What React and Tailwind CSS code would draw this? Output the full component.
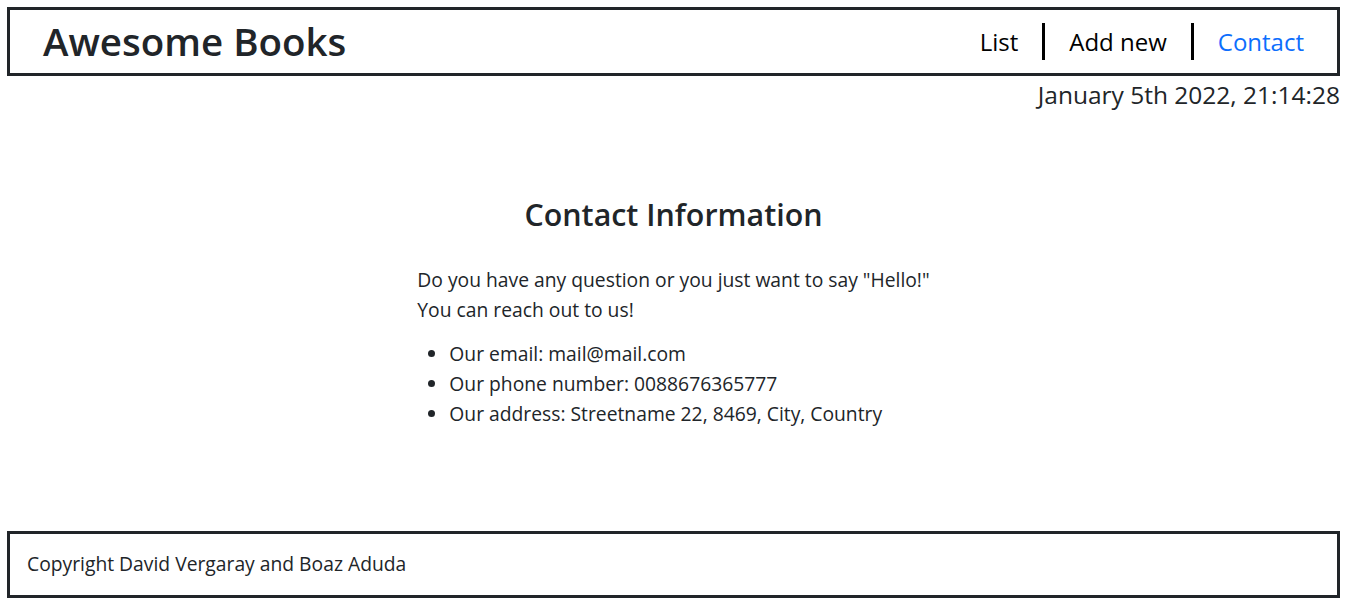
export default function App() {
  return (
    <div className="min-h-screen flex flex-col bg-white text-[#212529] font-['Open_Sans',sans-serif]">
      <header className="mx-[7px] mt-[7px] h-[69px] border-[3px] border-[#212529] flex items-center justify-between pl-[33px] pr-[33px]">
        <h1 className="text-[38.5px] font-semibold leading-none -mt-[1px]">Awesome Books</h1>
        <nav className="flex items-center text-[24px] leading-none">
          <a href="#list" className="text-black">List</a>
          <span className="mx-[24px] h-[37px] border-l-[3px] border-black"></span>
          <a href="#add" className="text-black">Add new</a>
          <span className="mx-[24px] h-[37px] border-l-[3px] border-black"></span>
          <a href="#contact" className="text-[#0d6efd]">Contact</a>
        </nav>
      </header>
      <p className="text-right pr-[7px] text-[24.5px] leading-[38px]">January 5th 2022, 21:14:28</p>

      <main className="flex-1 flex flex-col items-center pt-[82px]">
        <h2 className="text-[30.4px] font-semibold leading-[38px]">Contact Information</h2>
        <div className="mt-[31px] text-[19.3px] leading-[30px]">
          <p>Do you have any question or you just want to say "Hello!"</p>
          <p>You can reach out to us!</p>
          <ul className="mt-[14px] list-disc pl-[32px]">
            <li>Our email: mail@mail.com</li>
            <li>Our phone number: 0088676365777</li>
            <li>Our address: Streetname 22, 8469, City, Country</li>
          </ul>
        </div>
      </main>

      <footer className="mx-[7px] mb-[9px] h-[67px] border-[3px] border-[#212529] flex items-center pl-[17px] text-[19.3px]">
        <p>Copyright David Vergaray and Boaz Aduda</p>
      </footer>
    </div>
  )
}
